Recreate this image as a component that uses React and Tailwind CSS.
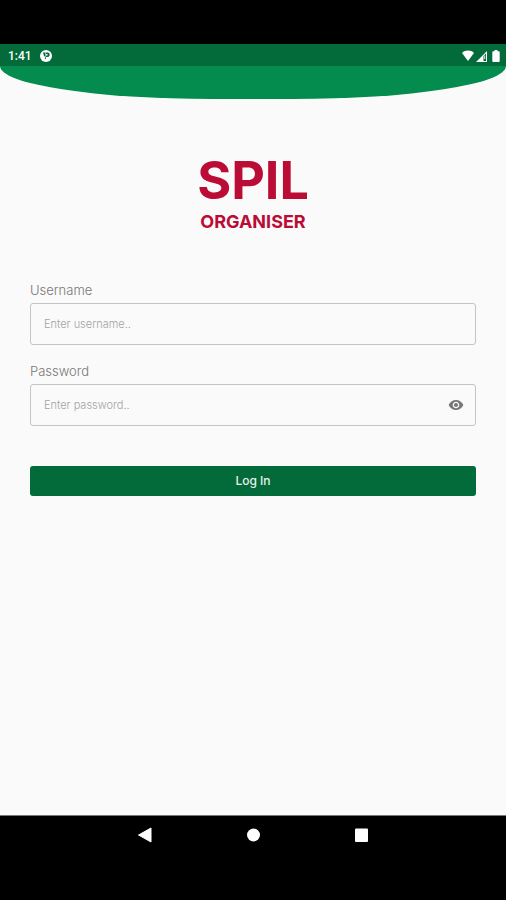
import { useState } from 'react';

function StatusBar() {
  return (
    <div className="flex h-[22px] items-center justify-between bg-[#036b39] pt-0.5 pr-1 pl-2 text-white">
      <div className="flex items-center gap-2">
        <span className="font-[Roboto,sans-serif] text-xs font-medium">1:41</span>
        <svg className="h-3 w-3" viewBox="0 0 24 24" aria-hidden="true">
          <circle cx="12" cy="12" r="12" fill="currentColor" />
          <path d="M6 5h5v9l-3-2zM12 5h3a4.500 4.500 0 0 1 0 9h-3v5l-3-3 3-2v-3h3V8h-3z" fill="#036b39" />
        </svg>
      </div>
      <div className="flex items-center gap-0.5">
        <svg className="h-3 w-3" viewBox="0 0 12 12" fill="currentColor" aria-hidden="true">
          <path d="M0 3C3.300-.2 8.700-.2 12 3L6 11z" />
        </svg>
        <svg className="h-3 w-3" viewBox="0 0 12 12" fill="currentColor" aria-hidden="true">
          <path fillRule="evenodd" d="M0 12 11 1v11zM7.500 6v5H10V3.500z" />
          <path d="M8.300 5.500h.9V9h-.9z" />
        </svg>
        <svg className="h-3 w-3" viewBox="0 0 12 12" fill="currentColor" aria-hidden="true">
          <path d="M4.500 0h3v1.200h1.200a1 1 0 0 1 1 1V11a1 1 0 0 1-1 1H3.300a1 1 0 0 1-1-1V2.200a1 1 0 0 1 1-1h1.200z" />
        </svg>
      </div>
    </div>
  );
}

function NavigationBar() {
  return (
    <nav className="flex h-[85px] justify-center gap-[84px] border-t border-[#777777] bg-black pt-[7px] text-white">
      <button type="button" aria-label="Back" className="h-6 w-6">
        <svg viewBox="0 0 24 24" fill="currentColor">
          <path d="M5.500 12 18 5v14z" stroke="currentColor" strokeLinejoin="round" />
        </svg>
      </button>
      <button type="button" aria-label="Home" className="h-6 w-6">
        <svg viewBox="0 0 24 24" fill="currentColor">
          <circle cx="12.500" cy="12" r="6.500" />
        </svg>
      </button>
      <button type="button" aria-label="Recent apps" className="h-6 w-6">
        <svg viewBox="0 0 24 24" fill="currentColor">
          <rect x="6" y="5.500" width="13" height="13.500" rx="1" />
        </svg>
      </button>
    </nav>
  );
}

function App() {
  const [username, setUsername] = useState('');
  const [password, setPassword] = useState('');
  const [showPassword, setShowPassword] = useState(false);

  return (
    <div className="flex min-h-screen flex-col bg-[#fafafa] font-[Inter,sans-serif]">
      <div className="h-11 bg-black"></div>
      <StatusBar />
      <div className="h-[33px] rounded-b-[42%_100%] bg-[#038c4e]"></div>

      <main className="flex-1 px-[30px] pt-[56px]">
        <h1 className="flex flex-col items-center font-bold text-[#ba0c35]">
          <span className="text-[52px] leading-[52px]">SPIL</span>
          <span className="mt-[5px] text-lg leading-5">ORGANISER</span>
        </h1>

        <form className="mt-[50px]" onSubmit={(e) => e.preventDefault()}>
          <label htmlFor="username" className="block text-[13px] leading-4 font-light text-[#777777]">
            Username
          </label>
          <input
            id="username"
            type="text"
            value={username}
            onChange={(e) => setUsername(e.target.value)}
            placeholder="Enter username.."
            className="mt-[5px] block h-[42px] w-full rounded-[3px] border border-[#c4c4c4] px-[13px] text-[11px] font-light placeholder:text-[#a3a3a3]"
          />

          <label htmlFor="password" className="mt-[18px] block text-[13px] leading-4 font-light text-[#777777]">
            Password
          </label>
          <div className="relative mt-[5px]">
            <input
              id="password"
              type={showPassword ? 'text' : 'password'}
              value={password}
              onChange={(e) => setPassword(e.target.value)}
              placeholder="Enter password.."
              className="block h-[42px] w-full rounded-[3px] border border-[#c4c4c4] pr-10 pl-[13px] text-[11px] font-light placeholder:text-[#a3a3a3]"
            />
            <button
              type="button"
              aria-label="Show password"
              onClick={() => setShowPassword(!showPassword)}
              className="absolute inset-y-0 right-3 flex items-center text-[#777777]"
            >
              <svg className="h-4 w-4" viewBox="0 0 24 24" fill="currentColor">
                <path d="M12 4.500C7 4.500 2.730 7.610 1 12c1.730 4.390 6 7.500 11 7.500s9.270-3.110 11-7.500c-1.730-4.390-6-7.500-11-7.500zM12 17c-2.760 0-5-2.240-5-5s2.240-5 5-5 5 2.240 5 5-2.240 5-5 5zm0-8c-1.660 0-3 1.340-3 3s1.340 3 3 3 3-1.340 3-3-1.340-3-3-3z" />
              </svg>
            </button>
          </div>

          <button
            type="submit"
            className="mt-10 h-[30px] w-full rounded-[3px] bg-[#036b39] text-xs font-medium text-[#e6f1eb]"
          >
            Log In
          </button>
        </form>
      </main>

      <NavigationBar />
    </div>
  );
}

export default App;
